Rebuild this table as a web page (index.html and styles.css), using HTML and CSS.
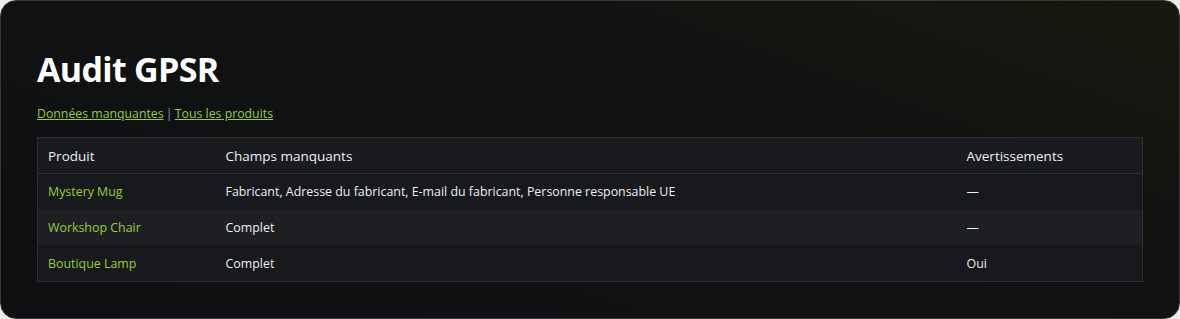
FILE: index.html
```html
<!DOCTYPE html>
<html lang="fr">
<head>
<meta charset="utf-8">
<title>Audit GPSR</title>
<link rel="stylesheet" href="styles.css">
</head>
<body>
<main class="card">
  <h1 class="title">Audit GPSR</h1>
  <nav class="filters">
    <a href="#" class="filter-link">Données manquantes</a> <span class="sep">|</span> <a href="#" class="filter-link">Tous les produits</a>
  </nav>
  <table class="audit">
    <colgroup>
      <col class="col-product">
      <col class="col-missing">
      <col class="col-warn">
    </colgroup>
    <thead>
      <tr><th>Produit</th><th>Champs manquants</th><th>Avertissements</th></tr>
    </thead>
    <tbody>
      <tr><td><a href="#" class="product">Mystery Mug</a></td><td>Fabricant, Adresse du fabricant, E-mail du fabricant, Personne responsable UE</td><td>—</td></tr>
      <tr><td><a href="#" class="product">Workshop Chair</a></td><td>Complet</td><td>—</td></tr>
      <tr><td><a href="#" class="product">Boutique Lamp</a></td><td>Complet</td><td>Oui</td></tr>
    </tbody>
  </table>
</main>
</body>
</html>
```

FILE: styles.css
```css
html, body {
  margin: 0;
  padding: 0;
  background: #ececec;
}
body {
  font-family: "Open Sans", "Noto Sans", sans-serif;
  color: #e6e8eb;
}
.card {
  box-sizing: border-box;
  width: 1180px;
  height: 319px;
  border: 1px solid #34363a;
  border-radius: 16px;
  background: linear-gradient(200deg, #17190f 0%, #111211 35%, #0e0f11 100%);
  padding: 36px 36px 0 36px;
}
.title {
  margin: 10px 0 0 0;
  font-size: 34px;
  line-height: 44px;
  font-weight: 700;
  color: #ffffff;
  letter-spacing: -0.7px;
}
.filters {
  margin-top: 14px;
  font-size: 12.3px;
  line-height: 18px;
}
.filter-link {
  color: #9acd32;
  text-decoration: underline;
}
.sep {
  color: #6c9ec9;
  margin: 0 -1px;
}
.audit {
  margin-top: 14px;
  width: 1106px;
  border-collapse: collapse;
  border: 1px solid #2d2f34;
  font-size: 12.4px;
  table-layout: fixed;
}
.col-product { width: 178px; }
.col-warn { width: 186px; }
.audit th {
  text-align: left;
  font-weight: 400;
  font-size: 13.5px;
  height: 35px;
  padding: 0 10px;
  background: #1a1b1f;
  border-bottom: 1px solid #2d2f34;
  color: #eceef1;
}
.audit td {
  height: 35.7px;
  padding: 0 10px;
  background: #18191c;
  color: #eceef1;
}
.audit tbody tr:nth-child(2) td {
  background: #1e1f23;
}
.product {
  color: #9acd32;
  text-decoration: none;
}
```
